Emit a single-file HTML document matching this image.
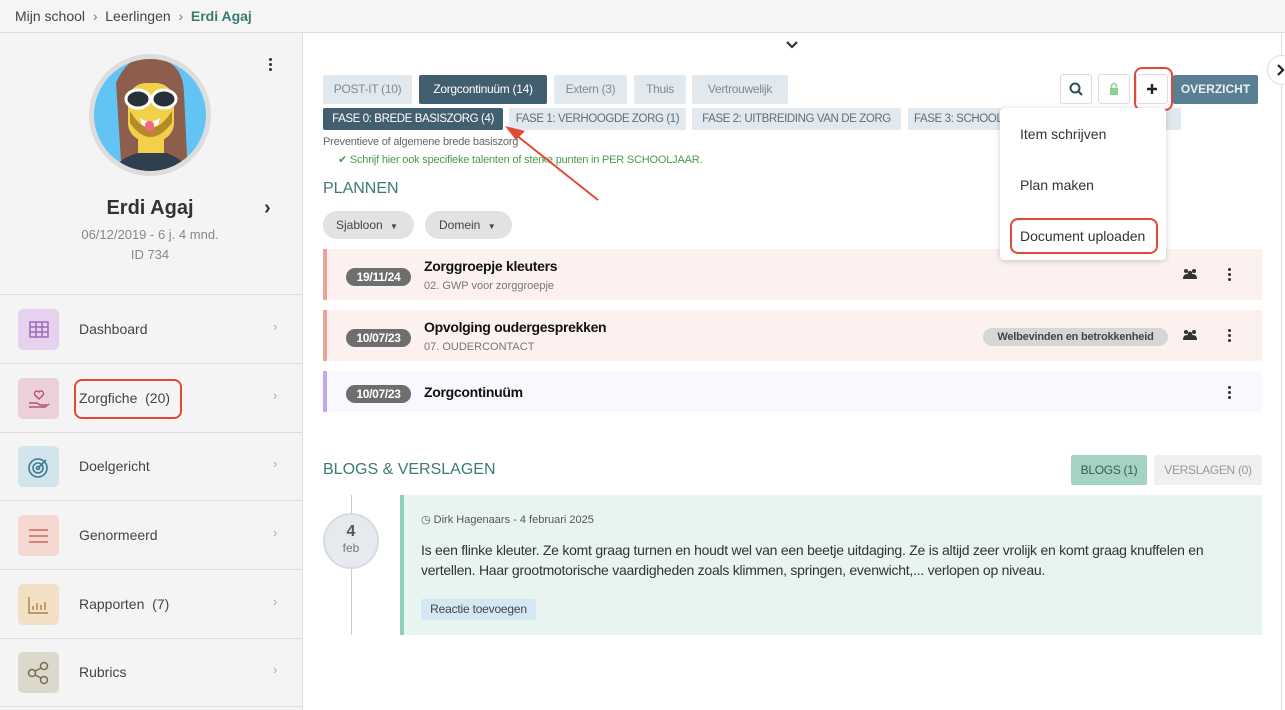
<!DOCTYPE html>
<html><head><meta charset="utf-8"><style>
*{box-sizing:border-box;margin:0;padding:0}
body{width:1285px;height:710px;overflow:hidden;font-family:"Liberation Sans",sans-serif;background:#fff;position:relative;color:#333}
.a{position:absolute}
.n{font-family:"Liberation Sans",sans-serif}
.tab{position:absolute;top:75px;height:29px;background:#e1e8ee;color:#7d8c98;font-size:12px;line-height:29px;text-align:center;border-radius:2px;letter-spacing:-0.3px}
.ph{position:absolute;top:108px;height:22px;background:#e1e8ee;color:#5e6f7c;font-size:11.5px;line-height:22px;text-align:center;border-radius:2px;white-space:nowrap;overflow:hidden;letter-spacing:-0.4px}
.row{position:absolute;left:323px;width:939px;border-left:4px solid #eba497;background:#fcf1ee}
.badge{position:absolute;left:19px;width:65px;height:18px;border-radius:9px;background:#6e6e6e;color:#fff;font-size:12px;font-weight:bold;line-height:18px;text-align:center;letter-spacing:-0.3px}
.mi{position:absolute;left:0;width:303px;height:69px;border-bottom:1px solid #ddd}
.ic{position:absolute;left:18px;top:14px;width:41px;height:41px;border-radius:5px}
.mi .t{position:absolute;left:79px;top:26px;font-size:14px;color:#444}
.mi .c{position:absolute;left:273px;top:24px;color:#aaa;font-size:13px}
.btn{position:absolute;top:74px;width:32px;height:30px;border:1px solid #ddd;border-radius:3px;background:#fff}
.dots{position:absolute;width:3px;height:13px}
.dots i{display:block;width:3px;height:3px;background:#333;border-radius:50%;margin-bottom:2px}
</style></head><body>
<div class="a" style="left:0;top:0;width:1285px;height:33px;background:#f5f5f5;border-bottom:1px solid #ddd"></div>
<div class="a" style="left:15px;top:8px;font-size:14px;color:#444">Mijn school &nbsp;<span style="color:#777">›</span>&nbsp; Leerlingen &nbsp;<span style="color:#777">›</span>&nbsp; <b style="color:#3b7a70">Erdi Agaj</b></div>
<div class="a" style="left:0;top:33px;width:303px;height:677px;background:#f4f4f4;border-right:1px solid #ddd"></div>
<svg class="a" style="left:88px;top:53px" width="124" height="124" viewBox="0 0 124 124">
<defs><clipPath id="cp"><circle cx="62" cy="62" r="56"/></clipPath></defs>
<circle cx="62" cy="62" r="61" fill="#ddd"/>
<g clip-path="url(#cp)"><rect width="124" height="124" fill="#62c4f5"/>
<path d="M34 124 L28 30 Q40 2 62 4 Q95 6 96 40 L100 124Z" fill="#8e5e4c"/>
<path d="M20 124 Q30 105 50 100 L78 100 Q96 105 104 124Z" fill="#2f3f4e"/>
<path d="M50 100 L50 80 L76 80 L76 100Z" fill="#f2d04a"/>
<rect x="40" y="30" width="46" height="58" rx="18" fill="#f2d04a"/>
<path d="M42 58 Q62 92 84 58 L84 70 Q62 98 42 70Z" fill="#b58a2a"/>
<ellipse cx="50" cy="46" rx="12" ry="9" fill="#263238" stroke="#fff" stroke-width="3"/>
<ellipse cx="76" cy="46" rx="12" ry="9" fill="#263238" stroke="#fff" stroke-width="3"/>
<path d="M52 65 Q62 72 72 65 L70 72 Q62 76 54 72Z" fill="#fff"/><rect x="57" y="68" width="9" height="10" rx="4" fill="#f06b82"/>
</g></svg>
<div class="dots a" style="left:269px;top:58px"><i></i><i></i><i></i></div>
<div class="a" style="left:0;width:300px;top:197px;text-align:center;font-size:20px;font-weight:bold;color:#333">Erdi Agaj</div>
<div class="a" style="left:264px;top:197px;font-size:20px;font-weight:bold">›</div>
<div class="a" style="left:0;width:300px;top:227px;text-align:center;font-size:13px;color:#888">06/12/2019 - 6 j. 4 mnd.</div>
<div class="a" style="left:0;width:300px;top:247px;text-align:center;font-size:13px;color:#888">ID 734</div>
<div class="a" style="left:0;top:294px;width:303px;border-top:1px solid #ddd"></div>
<div class="mi" style="top:295px"><div class="ic" style="background:#e6d2ee"><svg width="41" height="41"><g stroke="#9b6ab8" fill="none" stroke-width="1.5"><rect x="12" y="13" width="18" height="15"/><path d="M12 18h18M12 23h18M18 13v15M24 13v15"/></g></svg></div><div class="t">Dashboard</div><div class="c">›</div></div>
<div class="mi" style="top:364px"><div class="ic" style="background:#ecd0d8"><svg width="41" height="41"><g stroke="#b85070" fill="none" stroke-width="1.4"><path d="M21 21l-4-4a2.5 2.5 0 014-3 2.5 2.5 0 014 3z"/><path d="M11 25h8l3 2h7M11 29h16l4-3"/></g></svg></div><div class="t">Zorgfiche &nbsp;(20)</div><div class="c">›</div></div>
<div class="mi" style="top:432px"><div class="ic" style="background:#d2e4ec"><svg width="41" height="41"><g stroke="#3d7a96" fill="none" stroke-width="1.6"><circle cx="20" cy="22" r="9"/><circle cx="20" cy="22" r="5"/><circle cx="20" cy="22" r="1.5"/><path d="M21 21l7-7"/></g></svg></div><div class="t">Doelgericht</div><div class="c">›</div></div>
<div class="mi" style="top:501px"><div class="ic" style="background:#f5d8d2"><svg width="41" height="41"><g stroke="#d06a5a" stroke-width="1.4"><path d="M11 15h19M11 21h19M11 27h19"/></g></svg></div><div class="t">Genormeerd</div><div class="c">›</div></div>
<div class="mi" style="top:570px"><div class="ic" style="background:#f2e0c4"><svg width="41" height="41"><g stroke="#b08040" stroke-width="1.4" fill="none"><path d="M11 13v16h19M15 26v-4M19 26v-7M23 26v-5M27 26v-8"/></g></svg></div><div class="t">Rapporten &nbsp;(7)</div><div class="c">›</div></div>
<div class="mi" style="top:638px"><div class="ic" style="background:#ddd8cc"><svg width="41" height="41"><g stroke="#7a6a50" stroke-width="1.5" fill="none"><circle cx="14" cy="21" r="3.5"/><circle cx="26" cy="14" r="3.5"/><circle cx="26" cy="28" r="3.5"/><path d="M17 19l6-3M17 23l6 3"/></g></svg></div><div class="t">Rubrics</div><div class="c">›</div></div>
<div class="a" style="left:74px;top:379px;width:108px;height:40px;border:2.5px solid #e04a35;border-radius:8px"></div>
<svg class="a" style="left:785px;top:40px" width="14" height="10"><path d="M2 2l5 5 5-5" stroke="#333" stroke-width="2.2" fill="none"/></svg>
<div class="a" style="left:1281px;top:33px;height:677px;border-left:1px solid #ddd"></div>
<div class="a" style="left:1267px;top:55px;width:30px;height:30px;border-radius:50%;background:#fff;border:1px solid #ddd"></div>
<svg class="a" style="left:1276px;top:63px" width="10" height="14"><path d="M2 2l5 5-5 5" stroke="#222" stroke-width="2.2" fill="none"/></svg>
<div class="tab" style="left:323px;width:89px">POST-IT (10)</div>
<div class="tab" style="left:419px;width:128px;background:#425f6f;color:#fff">Zorgcontinuüm (14)</div>
<div class="tab" style="left:554px;width:73px">Extern (3)</div>
<div class="tab" style="left:634px;width:52px">Thuis</div>
<div class="tab" style="left:692px;width:96px">Vertrouwelijk</div>
<div class="ph" style="left:323px;width:180px;background:#425f6f;color:#fff">FASE 0: BREDE BASISZORG (4)</div>
<div class="ph" style="left:509px;width:177px">FASE 1: VERHOOGDE ZORG (1)</div>
<div class="ph" style="left:692px;width:209px">FASE 2: UITBREIDING VAN DE ZORG</div>
<div class="ph" style="left:908px;width:273px;text-align:left;padding-left:6px">FASE 3: SCHOOL OVERSTIJGENDE ZORG (9)</div>
<div class="a" style="left:323px;top:136px;font-size:11px;color:#666;letter-spacing:-0.2px">Preventieve of algemene brede basiszorg</div>
<div class="a" style="left:338px;top:153px;font-size:11px;color:#4a9a50;letter-spacing:-0.2px">✔ Schrijf hier ook specifieke talenten of sterke punten in PER SCHOOLJAAR.</div>
<div class="a" style="left:323px;top:180px;font-size:16px;color:#3d7a72">PLANNEN</div>
<div class="a" style="left:323px;top:211px;width:91px;height:28px;border-radius:14px;background:#e2e2e2;font-size:12px;line-height:28px;padding-left:13px;color:#444">Sjabloon <span style="font-size:8px;margin-left:4px">▼</span></div>
<div class="a" style="left:425px;top:211px;width:87px;height:28px;border-radius:14px;background:#e2e2e2;font-size:12px;line-height:28px;padding-left:14px;color:#444">Domein <span style="font-size:8px;margin-left:4px">▼</span></div>
<div class="row" style="top:249px;height:51px"><div class="badge" style="top:19px">19/11/24</div><div class="a" style="left:97px;top:9px;font-size:14px;font-weight:bold;color:#111;letter-spacing:-0.3px">Zorggroepje kleuters</div><div class="a" style="left:97px;top:31px;font-size:11px;color:#777">02. GWP voor zorggroepje</div></div>
<div class="row" style="top:310px;height:51px"><div class="badge" style="top:19px">10/07/23</div><div class="a" style="left:97px;top:9px;font-size:14px;font-weight:bold;color:#111;letter-spacing:-0.3px">Opvolging oudergesprekken</div><div class="a" style="left:97px;top:31px;font-size:11px;color:#777">07. OUDERCONTACT</div><div class="a" style="left:656px;top:18px;width:185px;height:18px;border-radius:9px;background:#d6d6d6;font-size:11px;font-weight:bold;line-height:18px;text-align:center;color:#444;letter-spacing:-0.2px">Welbevinden en betrokkenheid</div></div>
<div class="row" style="top:371px;height:41px;background:#f9f8fe;border-left-color:#c9a6ea"><div class="badge" style="top:14px">10/07/23</div><div class="a" style="left:97px;top:13px;font-size:14px;font-weight:bold;color:#111;letter-spacing:-0.3px">Zorgcontinuüm</div></div>
<svg class="a" style="left:1182px;top:268px" width="16" height="14"><g fill="#333"><circle cx="4" cy="3" r="2"/><circle cx="12" cy="3" r="2"/><circle cx="8" cy="5" r="2.3"/><path d="M1 11q0-5 4-5h6q4 0 4 5z"/></g></svg>
<svg class="a" style="left:1182px;top:329px" width="16" height="14"><g fill="#333"><circle cx="4" cy="3" r="2"/><circle cx="12" cy="3" r="2"/><circle cx="8" cy="5" r="2.3"/><path d="M1 11q0-5 4-5h6q4 0 4 5z"/></g></svg>
<div class="dots a" style="left:1228px;top:268px"><i></i><i></i><i></i></div>
<div class="dots a" style="left:1228px;top:329px"><i></i><i></i><i></i></div>
<div class="dots a" style="left:1228px;top:386px"><i></i><i></i><i></i></div>
<div class="btn" style="left:1060px"><svg width="30" height="28"><circle cx="14" cy="13" r="4.5" stroke="#2f4f5f" stroke-width="2" fill="none"/><path d="M17 16l4 4" stroke="#2f4f5f" stroke-width="2.2"/></svg></div>
<div class="btn" style="left:1098px"><svg width="30" height="28"><rect x="11" y="13" width="8" height="7" fill="#8fd08a"/><path d="M12.5 13v-2a2.5 2.5 0 015 0v2" stroke="#8fd08a" stroke-width="1.5" fill="none"/></svg></div>
<div class="btn" style="left:1136px"><svg width="30" height="28"><path d="M15 9v10M10 14h10" stroke="#222" stroke-width="2.4"/></svg></div>
<div class="a" style="left:1134px;top:67px;width:39px;height:44px;border:2.5px solid #e04a35;border-radius:8px"></div>
<div class="a" style="left:1173px;top:75px;width:85px;height:29px;background:#5a7f94;color:#e8eef2;font-size:12px;font-weight:bold;line-height:29px;text-align:center;border-radius:2px">OVERZICHT</div>
<div class="a" style="left:1000px;top:108px;width:166px;height:152px;background:#fff;border-radius:4px;box-shadow:0 1px 6px rgba(0,0,0,.2)"></div>
<div class="a" style="left:1020px;top:126px;font-size:14px;color:#333">Item schrijven</div>
<div class="a" style="left:1020px;top:177px;font-size:14px;color:#333">Plan maken</div>
<div class="a" style="left:1020px;top:228px;font-size:14px;color:#333">Document uploaden</div>
<div class="a" style="left:1010px;top:218px;width:148px;height:36px;border:2.5px solid #e04a35;border-radius:8px"></div>
<svg class="a" style="left:495px;top:115px" width="110" height="90"><path d="M103 85L16 16" stroke="#e04a35" stroke-width="2"/><path d="M10 11l20 5-9 9z" fill="#e04a35"/></svg>
<div class="a" style="left:323px;top:461px;font-size:16px;color:#3d7a72">BLOGS &amp; VERSLAGEN</div>
<div class="a" style="left:1071px;top:455px;width:76px;height:30px;background:#a3d4c2;border-radius:2px;font-size:12px;line-height:30px;text-align:center;color:#3a5a50;letter-spacing:-0.3px">BLOGS (1)</div>
<div class="a" style="left:1154px;top:455px;width:108px;height:30px;background:#efefef;border-radius:2px;font-size:12px;line-height:30px;text-align:center;color:#999;letter-spacing:-0.3px">VERSLAGEN (0)</div>
<div class="a" style="left:351px;top:495px;height:140px;border-left:1px solid #ccc"></div>
<div class="a" style="left:323px;top:513px;width:56px;height:56px;border-radius:50%;background:#e6e9ee;border:2px solid #d8dce2;text-align:center"><div style="font-size:16px;font-weight:bold;color:#555;margin-top:8px">4</div><div style="font-size:12px;color:#777">feb</div></div>
<div class="a" style="left:400px;top:495px;width:862px;height:140px;background:#e8f4ef;border-left:4px solid #8fd0b8"></div>
<div class="a" style="left:421px;top:513px;font-size:11px;color:#555">◷ Dirk Hagenaars - 4 februari 2025</div>
<div class="a" style="left:421px;top:540px;width:825px;font-size:14px;line-height:20px;color:#333;letter-spacing:-0.25px">Is een flinke kleuter. Ze komt graag turnen en houdt wel van een beetje uitdaging. Ze is altijd zeer vrolijk en komt graag knuffelen en vertellen. Haar grootmotorische vaardigheden zoals klimmen, springen, evenwicht,... verlopen op niveau.</div>
<div class="a" style="left:421px;top:599px;width:115px;height:21px;background:#d3e8f2;border-radius:2px;font-size:12px;line-height:21px;text-align:center;color:#444;letter-spacing:-0.2px">Reactie toevoegen</div>
</body></html>
